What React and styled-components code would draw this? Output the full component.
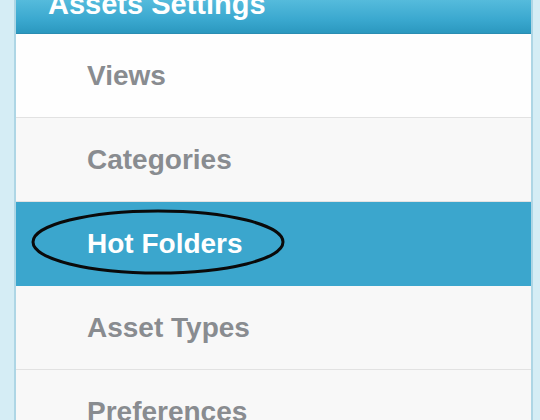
import React from "react";
import styled, { createGlobalStyle } from "styled-components";

const Global = createGlobalStyle`
  html, body { margin: 0; padding: 0; background: #d5edf5; overflow: hidden; }
  body { font-family: "Liberation Sans", Arial, sans-serif; }
`;

const Page = styled.div`
  display: flex;
  width: 540px;
  height: 420px;
  overflow: hidden;
`;

const SideBand = styled.div`
  flex: 0 0 auto;
  width: ${(p) => p.$w}px;
  background: #d5edf5;
  ${(p) => (p.$side === "left" ? "border-right" : "border-left")}: 2px solid #aed6e5;
`;

const Panel = styled.div`
  flex: 1 1 auto;
  display: flex;
  flex-direction: column;
  background: #f8f8f8;
  overflow: hidden;
`;

const Header = styled.div`
  height: 33px;
  flex: 0 0 auto;
  padding-left: 32px;
  background: linear-gradient(to bottom, #55bbdc 0%, #3aa8cf 60%, #2b98bf 100%);
  border-bottom: 1px solid #2a8db2;
  overflow: hidden;
`;

const HeaderTitle = styled.div`
  margin-top: -10px;
  font-size: 29px;
  line-height: 28px;
  font-weight: bold;
  color: #ffffff;
  white-space: nowrap;
`;

const Row = styled.div`
  position: relative;
  flex: 0 0 auto;
  height: 83px;
  display: flex;
  align-items: center;
  padding-left: 71px;
  border-bottom: 1px solid ${(p) => (p.$active ? "#3ba6cd" : "#e2e2e2")};
  background: ${(p) => (p.$active ? "#3ba6cd" : p.$first ? "#fefefe" : "#f8f8f8")};
  color: ${(p) => (p.$active ? "#ffffff" : "#898c90")};
  font-size: 28px;
  font-weight: bold;
  white-space: nowrap;
`;

const Ring = styled.svg`
  position: absolute;
  left: 14px;
  top: 6px;
  width: 256px;
  height: 68px;
  overflow: visible;
  pointer-events: none;
`;

const items = ["Views", "Categories", "Hot Folders", "Asset Types", "Preferences"];

export default function App() {
  return (
    <>
      <Global />
      <Page>
        <SideBand $w={14} $side="left" />
        <Panel>
          <Header>
            <HeaderTitle>Assets Settings</HeaderTitle>
          </Header>
          {items.map((label, i) => {
            const active = label === "Hot Folders";
            return (
              <Row key={label} $active={active} $first={i === 0}>
                {label}
                {active && (
                  <Ring viewBox="0 0 256 68">
                    <ellipse cx="128" cy="34" rx="125" ry="31" fill="none" stroke="#0a0a0a" strokeWidth="3" />
                  </Ring>
                )}
              </Row>
            );
          })}
        </Panel>
        <SideBand $w={7} $side="right" />
      </Page>
    </>
  );
}
